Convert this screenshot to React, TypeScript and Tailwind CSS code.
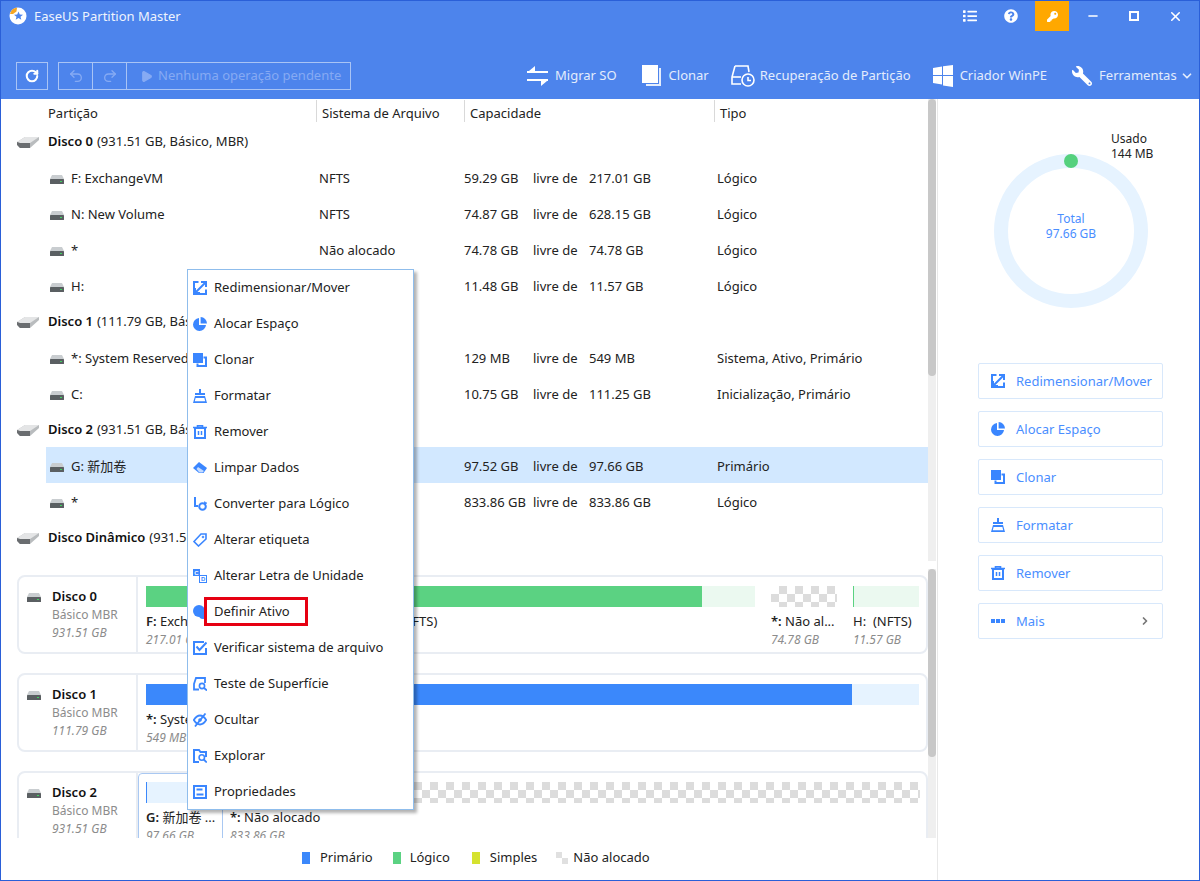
import React from 'react';

import { ChevronDown, ChevronRight, Minus, Play, Redo2, RotateCw, Undo2, X } from 'lucide-react';
import { FaKey, FaList, FaQuestionCircle, FaWrench } from 'react-icons/fa';

const BLUE = '#3a86ff';

type IconProps = { className?: string };

// ---- ícones das ações (azuis, 14px)
const IconResize = ({ className = '' }: IconProps) => (
  <svg viewBox="0 0 14 14" className={className} fill="none" stroke={BLUE}>
    <path d="M5.5 1H1v12h12V8.5" strokeWidth="2" />
    <path d="M8 1h5v5" strokeWidth="2" />
    <path d="M12.5 1.5L2 12" strokeWidth="2" />
    <path d="M2 7v5h5" strokeWidth="2" />
  </svg>
);
const IconPie = ({ className = '' }: IconProps) => (
  <svg viewBox="0 0 14 14" className={className} fill={BLUE}>
    <path d="M6 1a6.5 6.5 0 1 0 7 7H6z" />
    <path d="M7.6 0a6.5 6.5 0 0 1 6.4 6.4H7.6z" />
  </svg>
);
const IconClone = ({ className = '' }: IconProps) => (
  <svg viewBox="0 0 14 14" className={className}>
    <rect x="0" y="0" width="10" height="10" fill={BLUE} />
    <path d="M10.5 4.5H13V13H4.5V10.5" fill="none" stroke={BLUE} strokeWidth="2" />
  </svg>
);
const IconFormat = ({ className = '' }: IconProps) => (
  <svg viewBox="0 0 14 14" className={className} fill={BLUE}>
    <rect x="6" y="0" width="2" height="4" />
    <rect x="2" y="4" width="10" height="2" />
    <path d="M2 7h10l2 7H0zM2.6 9l-.8 3.2h10.4L11.4 9z" fillRule="evenodd" />
  </svg>
);
const IconTrash = ({ className = '' }: IconProps) => (
  <svg viewBox="0 0 14 14" className={className} fill="none" stroke={BLUE}>
    <path d="M0 2.5h14M4.5 2.5V.8h5v1.700" strokeWidth="1.600" />
    <rect x="2" y="3" width="10" height="10" strokeWidth="2" />
    <path d="M5.500 6v4M8.500 6v4" strokeWidth="1.500" />
  </svg>
);
const IconEraser = ({ className = '' }: IconProps) => (
  <svg viewBox="0 0 14 14" className={className}>
    <path d="M6 1l8 6-3.500 5H6L0 7z" fill={BLUE} />
    <path d="M5 6l6 4-1.500 1.500H6.300L3.500 8z" fill="#fff" opacity="0.7" />
  </svg>
);
const IconConvert = ({ className = '' }: IconProps) => (
  <svg viewBox="0 0 14 14" className={className} fill="none" stroke={BLUE}>
    <path d="M2 0v9h3" strokeWidth="2" />
    <circle cx="9.500" cy="9.500" r="3.300" strokeWidth="2" />
    <path d="M11 4.500l3 1.500-2.500 2" fill={BLUE} strokeWidth="0.500" />
  </svg>
);
const IconTag = ({ className = '' }: IconProps) => (
  <svg viewBox="0 0 14 14" className={className} fill="none" stroke={BLUE}>
    <path d="M8 1h5v5l-7.500 7L1 8.500z" strokeWidth="1.600" />
    <circle cx="10" cy="4" r="1" fill={BLUE} strokeWidth="0.500" />
  </svg>
);
const IconLetter = ({ className = '' }: IconProps) => (
  <svg viewBox="0 0 14 14" className={className}>
    <rect x="0" y="0" width="7" height="7" fill={BLUE} />
    <rect x="6.500" y="6.500" width="7" height="7" fill="#fff" stroke={BLUE} />
    <text x="1.300" y="5.600" fontSize="6" fontWeight="700" fill="#fff" fontFamily="Liberation Sans, sans-serif">C</text>
    <text x="8" y="12.400" fontSize="6" fontWeight="700" fill={BLUE} fontFamily="Liberation Sans, sans-serif">D</text>
  </svg>
);
const IconActive = ({ className = '' }: IconProps) => (
  <svg viewBox="0 0 14 14" className={className} fill={BLUE}>
    <circle cx="6" cy="6" r="6" />
    <circle cx="10" cy="10" r="4" />
  </svg>
);
const IconCheck = ({ className = '' }: IconProps) => (
  <svg viewBox="0 0 14 14" className={className} fill="none" stroke={BLUE}>
    <path d="M11 1H1v12h12V7" strokeWidth="2" />
    <path d="M3.500 5.500L6.500 9 13.500 1.500" strokeWidth="2" />
  </svg>
);
const IconSurface = ({ className = '' }: IconProps) => (
  <svg viewBox="0 0 14 14" className={className} fill="none" stroke={BLUE}>
    <path d="M6 12.500H1V7L3 1h9v5" strokeWidth="1.800" />
    <circle cx="9" cy="9" r="2.600" strokeWidth="1.600" />
    <path d="M11 11l3 2.500" strokeWidth="1.800" />
  </svg>
);
const IconEye = ({ className = '' }: IconProps) => (
  <svg viewBox="0 0 14 14" className={className} fill="none" stroke={BLUE}>
    <path d="M0.800 7C3 3.500 5 2.500 7 2.500S11 3.500 13.200 7C11 10.500 9 11.500 7 11.500S3 10.500 0.800 7z" strokeWidth="1.800" />
    <circle cx="7" cy="7" r="1.800" fill={BLUE} stroke="none" />
    <path d="M12.500 0.500L2 13.500" strokeWidth="1.800" />
  </svg>
);
const IconFolder = ({ className = '' }: IconProps) => (
  <svg viewBox="0 0 14 14" className={className} fill="none" stroke={BLUE}>
    <path d="M6 13H1V1h5l1.500 2H13v5" strokeWidth="2" />
    <circle cx="8.800" cy="8.500" r="2.700" strokeWidth="1.600" />
    <path d="M10.800 10.500l3 3" strokeWidth="1.800" />
  </svg>
);
const IconProps2 = ({ className = '' }: IconProps) => (
  <svg viewBox="0 0 14 14" className={className} fill="none" stroke={BLUE}>
    <rect x="1" y="1" width="12" height="12" strokeWidth="2" />
    <path d="M3.500 4.500h6M3.500 9.500h7" strokeWidth="1.800" />
  </svg>
);
const IconDots = ({ className = '' }: IconProps) => (
  <svg viewBox="0 0 14 14" className={className} fill={BLUE}>
    <rect x="0" y="5" width="4" height="4" />
    <rect x="5" y="5" width="4" height="4" />
    <rect x="10" y="5" width="4" height="4" />
  </svg>
);

// ---- discos
const PartitionIcon = () => (
  <svg width="14" height="9" viewBox="0 0 14 9" className="shrink-0">
    <path d="M2 0h10l2 4H0z" fill="#c9cdd0" />
    <rect x="0" y="4" width="14" height="5" rx="0.500" fill="#5a5f62" />
    <rect x="10" y="6" width="2" height="1" fill="#3fd45f" />
  </svg>
);
const BigDiskIcon = () => (
  <svg width="22" height="11" viewBox="0 0 22 11" className="shrink-0">
    <path d="M0 5L8 0h14v3l-9 8H3L0 7z" fill="#b9bcbe" />
    <path d="M0 5L8 0h14L13 6H3z" fill="#e4e5e6" />
    <path d="M0 5l3 1h10v5H3L0 8z" fill="#6a6d70" />
  </svg>
);

// ---- barra de título / toolbar
const LogoMark = () => (
  <svg width="18" height="18" viewBox="0 0 18 18">
    <circle cx="9" cy="9" r="8.500" fill="#fff" />
    <path d="M1 7a8.500 8.500 0 0 1 7-6.400L7.500 4.500 4 7z" fill="#f5a623" />
    <path d="M9.500 4.500l1.300 3 3.200.2-2.500 2 .8 3.100-2.800-1.700-2.800 1.700.8-3.100-2.500-2 3.200-.2z" fill="#4d84ec" />
  </svg>
);
const MigrateIcon = () => (
  <svg width="22" height="20" viewBox="0 0 22 20" fill="#fff">
    <rect x="0" y="5" width="21" height="2" />
    <path d="M8 0v5H2z" />
    <rect x="0" y="13" width="21" height="2" />
    <path d="M14 20v-5h6z" />
  </svg>
);
const CloneIcon = () => (
  <svg width="20" height="22" viewBox="0 0 20 22">
    <rect x="0" y="0" width="16" height="18" fill="#fff" />
    <path d="M17 3h2v18H4v-2h13z" fill="#fff" opacity="0.85" />
  </svg>
);
const RecoveryIcon = () => (
  <svg width="24" height="24" viewBox="0 0 24 24" fill="none" stroke="#fff" strokeWidth="1.600">
    <path d="M4 2h13l1 6" />
    <path d="M4 2L1 13v7h9" />
    <path d="M1 13h9" />
    <circle cx="17" cy="16" r="6" />
    <path d="M17 13v3.500h3" />
  </svg>
);
const WindowsIcon = () => (
  <svg width="20" height="22" viewBox="0 0 20 22" fill="#fff">
    <path d="M0 3l9-1.500V10H0z" />
    <path d="M10 1.300L20 0v10H10z" />
    <path d="M0 11h9v8.500L0 18z" />
    <path d="M10 11h10v11l-10-1.500z" />
  </svg>
);

const ToolItem = ({ icon, label, gap, className = '' }: { icon: React.ReactNode; label: string; gap: string; className?: string }) => (
  <div className={`flex items-center ${gap} ${className}`}>
    {icon}
    <span className="text-[13px] text-[#e3ecfc] whitespace-nowrap">{label}</span>
  </div>
);

// ---- tabela
type Row =
  | { kind: 'disk'; name: string; info: string }
  | { kind: 'part'; name: string; fs: string; free: string; total: string; type: string; selected?: boolean };

const rows: Row[] = [
  { kind: 'disk', name: 'Disco 0', info: '(931.51 GB, Básico, MBR)' },
  { kind: 'part', name: 'F: ExchangeVM', fs: 'NFTS', free: '59.29 GB', total: '217.01 GB', type: 'Lógico' },
  { kind: 'part', name: 'N: New Volume', fs: 'NFTS', free: '74.87 GB', total: '628.15 GB', type: 'Lógico' },
  { kind: 'part', name: '*', fs: 'Não alocado', free: '74.78 GB', total: '74.78 GB', type: 'Lógico' },
  { kind: 'part', name: 'H:', fs: 'NFTS', free: '11.48 GB', total: '11.57 GB', type: 'Lógico' },
  { kind: 'disk', name: 'Disco 1', info: '(111.79 GB, Básico, MBR)' },
  { kind: 'part', name: '*: System Reserved', fs: 'NFTS', free: '129 MB', total: '549 MB', type: 'Sistema, Ativo, Primário' },
  { kind: 'part', name: 'C:', fs: 'NFTS', free: '10.75 GB', total: '111.25 GB', type: 'Inicialização, Primário' },
  { kind: 'disk', name: 'Disco 2', info: '(931.51 GB, Básico, MBR)' },
  { kind: 'part', name: 'G: 新加卷', fs: 'NFTS', free: '97.52 GB', total: '97.66 GB', type: 'Primário', selected: true },
  { kind: 'part', name: '*', fs: 'Não alocado', free: '833.86 GB', total: '833.86 GB', type: 'Lógico' },
  { kind: 'disk', name: 'Disco Dinâmico', info: '(931.51 GB)' },
];

const menuItems: [string, React.FC<IconProps>][] = [
  ['Redimensionar/Mover', IconResize],
  ['Alocar Espaço', IconPie],
  ['Clonar', IconClone],
  ['Formatar', IconFormat],
  ['Remover', IconTrash],
  ['Limpar Dados', IconEraser],
  ['Converter para Lógico', IconConvert],
  ['Alterar etiqueta', IconTag],
  ['Alterar Letra de Unidade', IconLetter],
  ['Definir Ativo', IconActive],
  ['Verificar sistema de arquivo', IconCheck],
  ['Teste de Superfície', IconSurface],
  ['Ocultar', IconEye],
  ['Explorar', IconFolder],
  ['Propriedades', IconProps2],
];

const sideButtons: [string, React.FC<IconProps>][] = [
  ['Redimensionar/Mover', IconResize],
  ['Alocar Espaço', IconPie],
  ['Clonar', IconClone],
  ['Formatar', IconFormat],
  ['Remover', IconTrash],
  ['Mais', IconDots],
];

const CHECKER = 'bg-[conic-gradient(#dcdcdc_25%,#ffffff_0_50%,#dcdcdc_0_75%,#ffffff_0)] bg-[length:16px_16px]';

// segmento do mapa de disco
const Segment = ({ width, bar, name, size, className = '' }: { width: string; bar: React.ReactNode; name: React.ReactNode; size: string; className?: string }) => (
  <div className={`${width} shrink-0 ${className}`}>
    {bar}
    <div className="mt-[5px] text-[13px] leading-[18px] text-[#222] whitespace-nowrap overflow-hidden">{name}</div>
    <div className="text-[12px] leading-[20px] italic text-[#8c8c8c] whitespace-nowrap">{size}</div>
  </div>
);

const DiskCard = ({ name, size, children, flush }: { name: string; size: string; children: React.ReactNode; flush?: boolean }) => (
  <div className="ml-[16px] w-[911px] h-[79px] shrink-0 rounded-lg border-2 border-[#e9edf3] flex overflow-hidden">
    <div className="w-[119px] shrink-0 border-r-2 border-[#e9edf3] flex">
      <div className="pl-[8px] pt-[16px]">
        <svg width="14" height="9" viewBox="0 0 14 9">
          <path d="M2 0h10l2 4H0z" fill="#c9cdd0" />
          <rect x="0" y="4" width="14" height="5" rx="0.500" fill="#5a5f62" />
          <rect x="10" y="6" width="2" height="1" fill="#3fd45f" />
        </svg>
      </div>
      <div className="pl-[11px] pt-[10px]">
        <div className="text-[13px] leading-[18px] font-semibold text-[#111]">{name}</div>
        <div className="text-[12px] leading-[19px] text-[#8c8c8c]">Básico MBR</div>
        <div className="text-[12px] leading-[17px] italic text-[#8c8c8c]">{size}</div>
      </div>
    </div>
    <div className={`flex-1 flex ${flush ? 'pl-0' : 'pl-[8px] pt-[9px]'}`}>{children}</div>
  </div>
);

const GreenBar = ({ fill }: { fill?: string }) => (
  <div className="h-[21px] bg-[#ebf9f0]">
    <div className={`h-full bg-[#5bd282] ${fill ?? 'w-px'}`} />
  </div>
);

const App: React.FC = () => {
  return (
    <div className="relative w-[1200px] h-[881px] bg-white border border-[#2a5fd8] flex flex-col overflow-hidden font-['Noto_Sans','Noto_Sans_CJK_SC',sans-serif] text-[13px] text-[#222]">
      {/* cabeçalho */}
      <div className="h-[98px] shrink-0 bg-[#4d84ec] flex flex-col">
        <div className="h-[30px] flex items-center">
          <div className="ml-[8px]"><LogoMark /></div>
          <span className="ml-[7px] pt-[2px] text-[13px] text-[#eef3fd]">EaseUS Partition Master</span>
          <div className="ml-auto flex items-center h-full text-white">
            <div className="w-[41px] flex justify-center"><FaList size={14} /></div>
            <div className="w-[41px] flex justify-center"><FaQuestionCircle size={14} /></div>
            <div className="ml-[4px] w-[34px] h-full bg-[#ffa800] flex items-center justify-center"><FaKey size={11} /></div>
            <div className="w-[48px] flex justify-center"><Minus size={14} strokeWidth={2.5} /></div>
            <div className="w-[34px] flex justify-center"><div className="w-[10px] h-[10px] border-2 border-white" /></div>
            <div className="w-[48px] flex justify-center"><X size={15} strokeWidth={2.5} /></div>
          </div>
        </div>
        <div className="mt-[31px] h-[28px] flex items-center">
          <div className="ml-[15px] w-[32px] h-[28px] border border-[#a9c4f5] flex items-center justify-center">
            <RotateCw size={14} strokeWidth={3.5} className="text-white" />
          </div>
          <div className="ml-[10px] h-[28px] w-[293px] border border-[#a9c4f5] flex items-center text-[#86aaf3]">
            <div className="w-[34px] h-full border-r border-[#a9c4f5] flex items-center justify-center"><Undo2 size={16} strokeWidth={2} /></div>
            <div className="w-[34px] h-full border-r border-[#a9c4f5] flex items-center justify-center"><Redo2 size={16} strokeWidth={2} /></div>
            <Play size={13} fill="#86aaf3" className="ml-[13px]" />
            <span className="ml-[5px] text-[13px] whitespace-nowrap">Nenhuma operação pendente</span>
          </div>
          <ToolItem icon={<MigrateIcon />} label="Migrar SO" gap="gap-[6px]" className="ml-[176px]" />
          <ToolItem icon={<CloneIcon />} label="Clonar" gap="gap-[7px]" className="ml-[25px]" />
          <ToolItem icon={<RecoveryIcon />} label="Recuperação de Partição" gap="gap-[5px]" className="ml-[22px]" />
          <ToolItem icon={<WindowsIcon />} label="Criador WinPE" gap="gap-[7px]" className="ml-[22px]" />
          <ToolItem icon={<FaWrench size={20} color="#fff" className="-scale-x-100" />} label="Ferramentas" gap="gap-[7px]" className="ml-[25px]" />
          <ChevronDown size={14} strokeWidth={3} className="ml-[3px] text-[#e3ecfc]" />
        </div>
      </div>

      {/* corpo */}
      <div className="flex-1 flex min-h-0">
        <div className="w-[936px] shrink-0 flex flex-col">
          {/* tabela de partições */}
          <div className="h-[462px] shrink-0 flex">
            <div className="w-[927px] shrink-0">
              <div className="h-[24px] flex items-center text-[13px] text-[#222]">
                <div className="w-[315px] h-[22px] pl-[47px] leading-[26px]">Partição</div>
                <div className="w-[148px] h-[22px] border-l border-[#d9d9d9] pl-[5px] leading-[26px]">Sistema de Arquivo</div>
                <div className="w-[250px] h-[22px] border-l border-[#d9d9d9] pl-[5px] leading-[26px]">Capacidade</div>
                <div className="h-[22px] border-l border-[#d9d9d9] pl-[5px] leading-[26px]">Tipo</div>
              </div>
              {rows.map((row, i) =>
                row.kind === 'disk' ? (
                  <div key={i} className="h-[36px] flex items-center pl-[16px] pt-[2px]">
                    <BigDiskIcon />
                    <span className="ml-[9px] font-semibold text-[#111]">{row.name}</span>
                    <span className="ml-[4px]">{row.info}</span>
                  </div>
                ) : (
                  <div key={i} className={`ml-[45px] h-[36px] flex items-center pt-[4px] ${row.selected ? 'bg-[#d2e8ff]' : ''}`}>
                    <div className="w-[273px] flex items-center pl-[4px] gap-[7px]">
                      <PartitionIcon />
                      <span>{row.name}</span>
                    </div>
                    <div className="w-[145px]">{row.fs}</div>
                    <div className="w-[69px]">{row.free}</div>
                    <div className="w-[56px]">livre de</div>
                    <div className="w-[128px]">{row.total}</div>
                    <div>{row.type}</div>
                  </div>
                )
              )}
            </div>
            <div className="w-[8px] h-full bg-[#efefef]">
              <div className="h-[277px] bg-[#c8c8c8] rounded-[4px]" />
            </div>
          </div>

          {/* mapa dos discos */}
          <div className="h-[277px] shrink-0 flex">
            <div className="w-[927px] shrink-0 h-full overflow-hidden pt-[14px] flex flex-col gap-[19px]">
              <DiskCard name="Disco 0" size="931.51 GB">
                <div className="flex gap-[16px]">
                  <Segment width="w-[139px]" bar={<div className="h-[21px] bg-[#5bd282]" />} name={<><b className="font-semibold">F:</b> ExchangeVM (NFTS)</>} size="217.01 GB" />
                  <Segment width="w-[454px]" bar={<GreenBar fill="w-[401px]" />} name={<><b className="font-semibold">N:</b> New Volume (NFTS)</>} size="628.15 GB" />
                  <Segment width="w-[66px]" bar={<div className={`h-[21px] ${CHECKER}`} />} name={<><b className="font-semibold">*:</b> Não al...</>} size="74.78 GB" />
                  <Segment width="w-[66px]" bar={<GreenBar />} name={<>H:&nbsp; (NFTS)</>} size="11.57 GB" />
                </div>
              </DiskCard>
              <DiskCard name="Disco 1" size="111.79 GB">
                <div className="flex gap-[16px]">
                  <Segment width="w-[67px]" bar={<div className="h-[21px] bg-[#3b88fb]" />} name={<><b className="font-semibold">*:</b> System Res...</>} size="549 MB" />
                  <Segment width="w-[690px]" bar={<div className="h-[21px] bg-[#e6f3ff]"><div className="h-full w-[623px] bg-[#3b88fb]" /></div>} name={<><b className="font-semibold">C:</b> (NFTS)</>} size="111.25 GB" />
                </div>
              </DiskCard>
              <DiskCard name="Disco 2" size="931.51 GB" flush>
                <div className="flex gap-[7px]">
                  <div className="w-[85px] shrink-0 h-[79px] border border-[#a9c8f2] rounded-t-sm pl-[7px] pt-[8px]">
                    <div className="h-[21px] bg-[#e6f3ff] border-l border-[#3b88fb]" />
                    <div className="mt-[5px] text-[13px] leading-[18px] whitespace-nowrap overflow-hidden"><b className="font-semibold">G:</b> 新加卷 ...</div>
                    <div className="text-[12px] leading-[20px] italic text-[#8c8c8c]">97.66 GB</div>
                  </div>
                  <div className="pt-[9px]">
                    <Segment width="w-[690px]" bar={<div className={`h-[21px] ${CHECKER}`} />} name={<><b className="font-semibold">*:</b> Não alocado</>} size="833.86 GB" />
                  </div>
                </div>
              </DiskCard>
            </div>
            <div className="w-[8px] h-full pt-[8px]">
              <div className="h-full bg-[#efefef]">
                <div className="h-[188px] bg-[#c8c8c8] rounded-[4px]" />
              </div>
            </div>
          </div>

          {/* legenda */}
          <div className="flex-1 flex items-center pl-[301px] pb-[2px] text-[13px]">
            <div className="w-[8px] h-[12px] bg-[#3b88fb]" />
            <span className="ml-[10px]">Primário</span>
            <div className="ml-[20px] w-[8px] h-[12px] bg-[#5bd282]" />
            <span className="ml-[9px]">Lógico</span>
            <div className="ml-[22px] w-[8px] h-[12px] bg-[#d5e22f]" />
            <span className="ml-[10px]">Simples</span>
            <div className="ml-[19px] w-[12px] h-[12px] bg-[conic-gradient(#ffffff_25%,#e0e0e0_0_50%,#ffffff_0_75%,#e0e0e0_0)] bg-[length:12px_12px]" />
            <span className="ml-[5px]">Não alocado</span>
          </div>
        </div>

        {/* painel direito */}
        <div className="flex-1 border-l border-[#e8e8e8] flex flex-col">
          <div className="ml-[173px] mt-[32px] text-[12px] leading-[15px] text-[#222]">
            <div>Usado</div>
            <div>144 MB</div>
          </div>
          <div className="relative ml-[56px] -mt-[7px] w-[154px] h-[154px] rounded-full border-[14px] border-[#e6f3ff] flex flex-col items-center justify-center pb-[10px] text-[12px] leading-[15px] text-[#4a8eff]">
            <div className="absolute -top-[14px] left-[56px] w-[14px] h-[14px] rounded-full bg-[#55d17e]" />
            <div>Total</div>
            <div>97.66 GB</div>
          </div>
          <div className="ml-[40px] mt-[55px] flex flex-col gap-[12px]">
            {sideButtons.map(([label, Icon]) => (
              <div key={label} className="w-[185px] h-[36px] border border-[#d8e8fb] rounded-[2px] flex items-center pl-[12px] text-[13px] text-[#4a8eff]">
                <Icon className="w-[14px] h-[14px]" />
                <span className="ml-[11px] pt-[2px]">{label}</span>
                {label === 'Mais' && <ChevronRight size={12} strokeWidth={3.5} className="ml-auto mr-[11px] text-[#777]" />}
              </div>
            ))}
          </div>
        </div>
      </div>

      {/* menu de contexto */}
      <div className="absolute left-[186px] top-[268px] w-[227px] h-[541px] bg-white border border-[#8fbdec] shadow-[3px_3px_3px_rgba(0,0,0,0.3)]">
        {menuItems.map(([label, Icon]) => (
          <div key={label} className="h-[36px] flex items-center pl-[5px] text-[13px] text-[#222] whitespace-nowrap">
            <Icon className="w-[14px] h-[14px] shrink-0" />
            <span className="ml-[7px]">{label}</span>
          </div>
        ))}
        <div className="absolute left-[16px] top-[327px] w-[104px] h-[29px] border-[3px] border-[#e60012]" />
      </div>
    </div>
  );
};

export default App;
